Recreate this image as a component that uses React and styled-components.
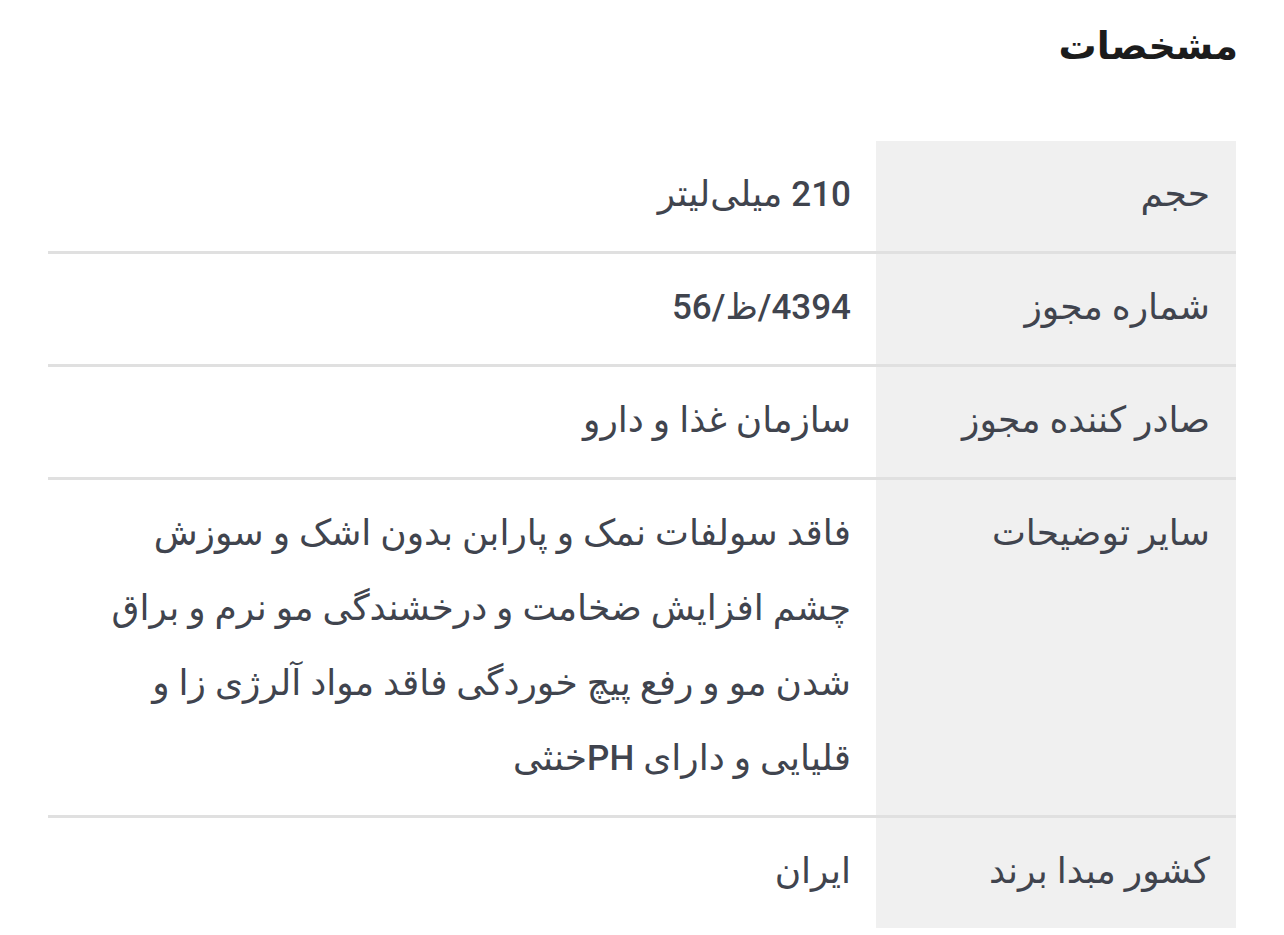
import React from 'react';
import styled, { createGlobalStyle } from 'styled-components';

const GlobalStyle = createGlobalStyle`
    html, body {
        margin: 0;
        padding: 0;
        background: #ffffff;
    }
    body {
        font-family: Roboto, "DejaVu Sans", sans-serif;
        direction: rtl;
    }
`;

const Wrapper = styled.div`
    padding: 14px 48px 0 48px;
`;

const Title = styled.h2`
    margin: 0 -2px 0 0;
    font-family: Roboto, "DejaVu Sans", sans-serif;
    font-weight: bold;
    font-size: 38px;
    line-height: 64px;
    color: #1c1c1c;
`;

const Table = styled.div`
    margin-top: 63px;
    display: flex;
    flex-direction: column;
`;

const Row = styled.div`
    display: flex;
    border-bottom: ${props => (props.last ? 'none' : '3px solid #e0e0e0')};
`;

const Label = styled.div`
    width: 360px;
    flex-shrink: 0;
    box-sizing: border-box;
    padding: 16px 26px 19px 20px;
    background-color: #f0f0f0;
    font-size: 36px;
    line-height: 75px;
    color: #40444e;
`;

const Value = styled.div`
    flex: 1;
    padding: 16px 25px 19px 25px;
    font-size: 36px;
    line-height: 75px;
    color: #40444e;
`;

const Latin = styled.span`
    font-size: 35px;
    font-weight: 500;
    line-height: 1;
`;

const specs = [
    { label: 'حجم', value: [<><Latin>210</Latin> میلی‌لیتر</>] },
    { label: 'شماره مجوز', value: [<Latin>4394/ظ/56</Latin>] },
    { label: 'صادر کننده مجوز', value: ['سازمان غذا و دارو'] },
    {
        label: 'سایر توضیحات',
        value: [
            'فاقد سولفات نمک و پارابن بدون اشک و سوزش',
            'چشم افزایش ضخامت و درخشندگی مو نرم و براق',
            'شدن مو و رفع پیچ خوردگی فاقد مواد آلرژی زا و',
            <>قلیایی و دارای <Latin>PH</Latin>خنثی</>,
        ],
    },
    { label: 'کشور مبدا برند', value: ['ایران'] },
];

const App = () => (
    <Wrapper>
        <GlobalStyle />
        <Title>مشخصات</Title>
        <Table>
            {specs.map((spec, i) => (
                <Row key={`${i}`} last={i === specs.length - 1}>
                    <Label>{spec.label}</Label>
                    <Value>
                        {spec.value.map((line, j) => (
                            <div key={`${j}`}>{line}</div>
                        ))}
                    </Value>
                </Row>
            ))}
        </Table>
    </Wrapper>
);

export default App;
